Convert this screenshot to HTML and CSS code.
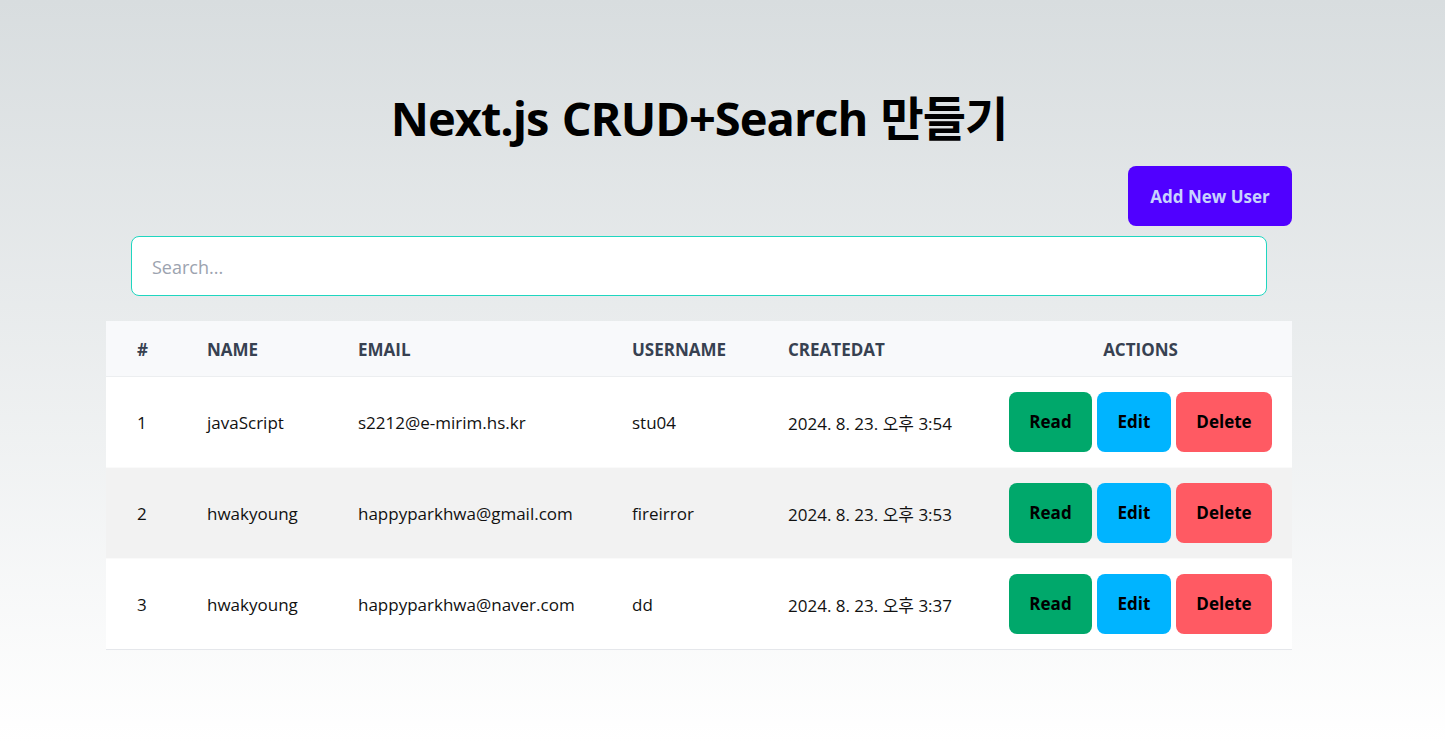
FILE: index.html
```html
<!DOCTYPE html>
<html lang="ko">
<head>
<meta charset="utf-8">
<title>Next.js CRUD+Search</title>
<link rel="stylesheet" href="styles.css">
</head>
<body>
<main class="page">
  <h1 class="title">Next.js CRUD+Search 만들기</h1>
  <div class="toolbar">
    <button class="btn-add">Add New User</button>
  </div>
  <div class="search-wrap">
    <input class="search" type="text" placeholder="Search...">
  </div>
  <table class="users">
    <colgroup>
      <col class="c-num"><col class="c-name"><col class="c-email"><col class="c-user"><col class="c-date"><col class="c-act">
    </colgroup>
    <thead>
      <tr>
        <th>#</th><th>Name</th><th>Email</th><th>Username</th><th>CreatedAt</th><th class="th-act">Actions</th>
      </tr>
    </thead>
    <tbody>
      <tr>
        <td>1</td><td>javaScript</td><td>s2212@e-mirim.hs.kr</td><td>stu04</td><td>2024. 8. 23. 오후 3:54</td>
        <td class="td-act"><div class="acts"><button class="b b-read">Read</button><button class="b b-edit">Edit</button><button class="b b-del">Delete</button></div></td>
      </tr>
      <tr class="alt">
        <td>2</td><td>hwakyoung</td><td>happyparkhwa@gmail.com</td><td>fireirror</td><td>2024. 8. 23. 오후 3:53</td>
        <td class="td-act"><div class="acts"><button class="b b-read">Read</button><button class="b b-edit">Edit</button><button class="b b-del">Delete</button></div></td>
      </tr>
      <tr>
        <td>3</td><td>hwakyoung</td><td>happyparkhwa@naver.com</td><td>dd</td><td>2024. 8. 23. 오후 3:37</td>
        <td class="td-act"><div class="acts"><button class="b b-read">Read</button><button class="b b-edit">Edit</button><button class="b b-del">Delete</button></div></td>
      </tr>
    </tbody>
  </table>
</main>
</body>
</html>
```

FILE: styles.css
```css
* { box-sizing: border-box; }
html, body { margin: 0; padding: 0; }
body {
  min-height: 743px;
  background: linear-gradient(to bottom, #d8dddf 0%, #ffffff 100%);
  font-family: "Open Sans", "Noto Sans CJK KR", sans-serif;
  color: #111;
}
.page {
  width: 1186px;
  margin-left: 106px;
  padding-top: 82px;
}
.title {
  margin: 0;
  font-size: 47px;
  line-height: 72px;
  font-weight: 700;
  letter-spacing: -1px;
  word-spacing: 2px;
  text-align: center;
  color: #000;
}
.toolbar {
  margin-top: 12px;
  display: flex;
  justify-content: flex-end;
}
.btn-add {
  height: 60px;
  width: 164px;
  border: none;
  border-radius: 8px;
  background: #5000ff;
  color: #c7d2fe;
  font-family: inherit;
  font-size: 17px;
  font-weight: 700;
}
.search-wrap {
  margin-top: 10px;
  padding: 0 25px;
}
.search {
  display: block;
  width: 100%;
  height: 60px;
  border: 1px solid #1fd6c0;
  border-radius: 8px;
  padding: 2px 20px 0;
  background: #fff;
  font-family: inherit;
  font-size: 18px;
  color: #111;
  outline: none;
}
.search::placeholder { color: #9ca3af; }
.users {
  margin-top: 25px;
  width: 100%;
  table-layout: fixed;
  border-collapse: collapse;
  font-size: 17px;
}
.c-num { width: 70px; }
.c-name { width: 151px; }
.c-email { width: 274px; }
.c-user { width: 156px; }
.c-date { width: 232px; }
.c-act { width: 303px; }
.users thead tr {
  background: #f8f9fb;
  border-bottom: 1px solid #eceef0;
}
.users th {
  height: 55px;
  padding: 2px 0 0 31px;
  text-align: left;
  font-weight: 700;
  text-transform: uppercase;
  color: #374151;
}
.users th.th-act { text-align: center; padding: 2px 20px 0; }
.users tbody tr {
  background: #fff;
  border-bottom: 1px solid #fafafa;
}
.users tbody tr.alt { background: #f2f2f2; }
.users tbody tr:last-child { border-bottom: 1px solid #e5e7eb; }
.users td {
  height: 91px;
  padding: 2px 0 0 31px;
  white-space: nowrap;
  color: #111;
}
.users td.td-act { padding: 0 20px; }
.acts {
  display: flex;
  justify-content: center;
  gap: 5px;
}
.b {
  height: 60px;
  border: none;
  border-radius: 8px;
  font-family: inherit;
  font-size: 17px;
  font-weight: 700;
  color: #000;
}
.b-read { width: 83px; background: #00a86b; }
.b-edit { width: 74px; background: #00b4ff; }
.b-del { width: 96px; background: #ff5a63; }
```
